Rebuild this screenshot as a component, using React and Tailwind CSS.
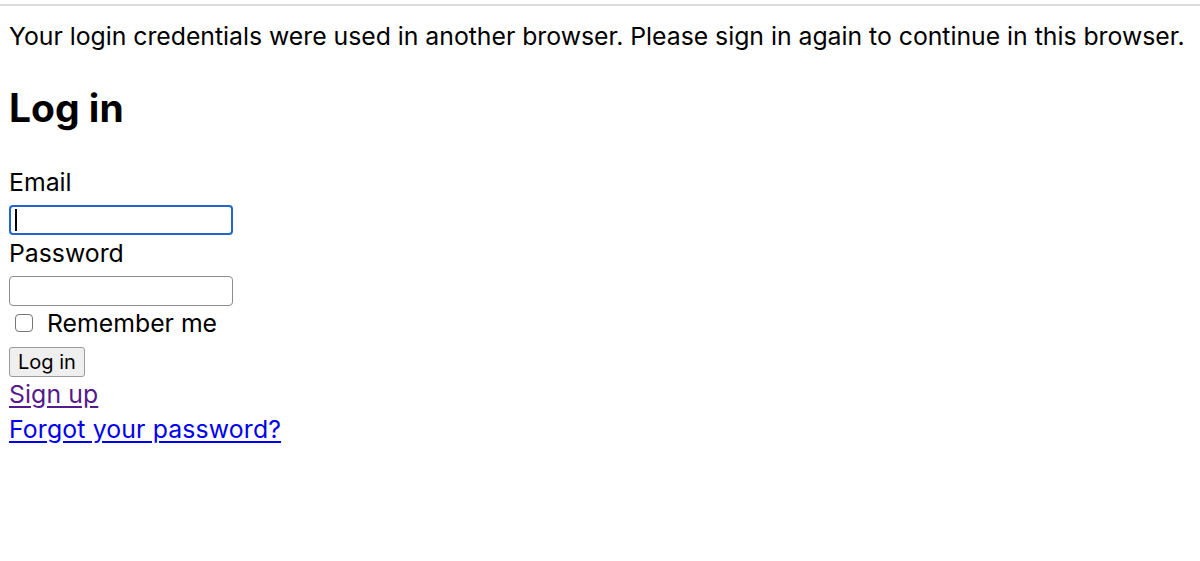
import React from "react";

export default function App() {
  return (
    <div className="min-h-[561px] bg-white text-black font-['Inter','Liberation_Sans',sans-serif] text-[24.8px]">
      <div className="h-[4px]" />
      <div className="h-[2px] bg-[#dcdcdc]" />
      <div className="px-[9px]">
        <p className="mt-[15px] leading-[30px] whitespace-nowrap tracking-[-0.02px]">
          Your login credentials were used in another browser. Please sign in again to continue in this browser.
        </p>
        <h1 className="mt-[34px] text-[39px] font-bold leading-[46px]">Log in</h1>

        <form className="flex flex-col items-start" onSubmit={(e) => e.preventDefault()}>
          <label className="mt-[36px] block leading-[30px]">Email</label>
          <div className="mt-[8px] flex h-[30px] w-[224px] items-center rounded-[4px] border-2 border-[#2464cf] pl-[4px]">
            <span className="h-[22px] w-[1.5px] bg-black" />
          </div>

          <label className="mt-[3px] block leading-[30px]">Password</label>
          <input
            type="password"
            className="mt-[8px] h-[30px] w-[224px] rounded-[4px] border border-[#8c8c8c] bg-white outline-none"
          />

          <label className="mt-[2px] flex items-center leading-[30px]">
            <span className="ml-[6px] mr-[14px] h-[18px] w-[18px] rounded-[4px] border border-[#767676] bg-white" />
            Remember me
          </label>

          <button
            type="submit"
            className="mt-[9px] h-[30px] w-[76px] rounded-[3px] border border-[#9a9a9a] bg-[#efefef] text-[20px] leading-[28px]"
          >
            Log in
          </button>

          <a href="#signup" className="mt-[2px] leading-[30px] text-[#551a8b] underline underline-offset-[3px] tracking-[0.1px]">
            Sign up
          </a>
          <a href="#forgot" className="mt-[5px] leading-[30px] text-[#0000ee] underline underline-offset-[3px] tracking-[0.15px]">
            Forgot your password?
          </a>
        </form>
      </div>
    </div>
  );
}
